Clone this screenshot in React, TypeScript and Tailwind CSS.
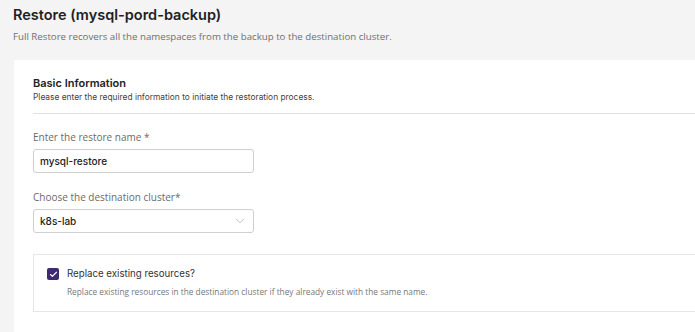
import { ChevronDown, Check } from 'lucide-react'

export default function App() {
  return (
    <div className="w-[695px] h-[332px] overflow-hidden bg-[#f4f4f4] font-['Inter',sans-serif]">
      {/* Header */}
      <div className="pl-[13px] pt-[5px]">
        <h1 className="text-[14.5px] leading-[20px] font-semibold text-[#1f1f1f]">Restore (mysql-pord-backup)</h1>
        <p className="mt-[5px] text-[9.7px] leading-[14px] text-[#6f6f6f] font-['Open_Sans',sans-serif]">
          Full Restore recovers all the namespaces from the backup to the destination cluster.
        </p>
      </div>

      {/* Card */}
      <div className="ml-[14px] mt-[16px] w-[760px] bg-white pl-[19px] pt-[15px] pb-[40px]">
        <h2 className="text-[11px] leading-[16px] font-semibold text-[#222]">Basic Information</h2>
        <p className="text-[8.4px] leading-[13px] text-[#444]">Please enter the required information to initiate the restoration process.</p>
        <div className="mt-[9px] h-px bg-[#e2e2e2]" />

        <label className="block mt-[16px] text-[10px] leading-[14px] text-[#6b6b6b] font-['Open_Sans',sans-serif]">Enter the restore name *</label>
        <div className="mt-[5px] w-[221px] h-[24px] border border-[#cfcfcf] rounded-[3px] flex items-center px-[6px] text-[10px] font-medium text-[#222]">
          mysql-restore
        </div>

        <label className="block mt-[17px] text-[10px] leading-[14px] text-[#6b6b6b] font-['Open_Sans',sans-serif]">Choose the destination cluster*</label>
        <div className="mt-[5px] w-[221px] h-[24px] border border-[#cfcfcf] rounded-[3px] flex items-center justify-between pl-[6px] pr-[6px] text-[10px] font-medium text-[#222]">
          <span>k8s-lab</span>
          <ChevronDown className="w-[14px] h-[14px] text-[#b5b5b5]" strokeWidth={1.5} />
        </div>

        <div className="mt-[21px] border border-[#e6e6e6] h-[58px] pl-[13px] pt-[12px]">
          <div className="flex items-center gap-[8px]">
            <span className="w-[12px] h-[12px] rounded-[2px] bg-[#3d2a73] flex items-center justify-center">
              <Check className="w-[9px] h-[9px] text-white" strokeWidth={3} />
            </span>
            <span className="text-[9.7px] leading-[14px] text-[#333]">Replace existing resources?</span>
          </div>
          <p className="mt-[5px] ml-[20px] text-[8.3px] leading-[12px] text-[#777] font-['Open_Sans',sans-serif]">
            Replace existing resources in the destination cluster if they already exist with the same name.
          </p>
        </div>
      </div>
    </div>
  )
}
